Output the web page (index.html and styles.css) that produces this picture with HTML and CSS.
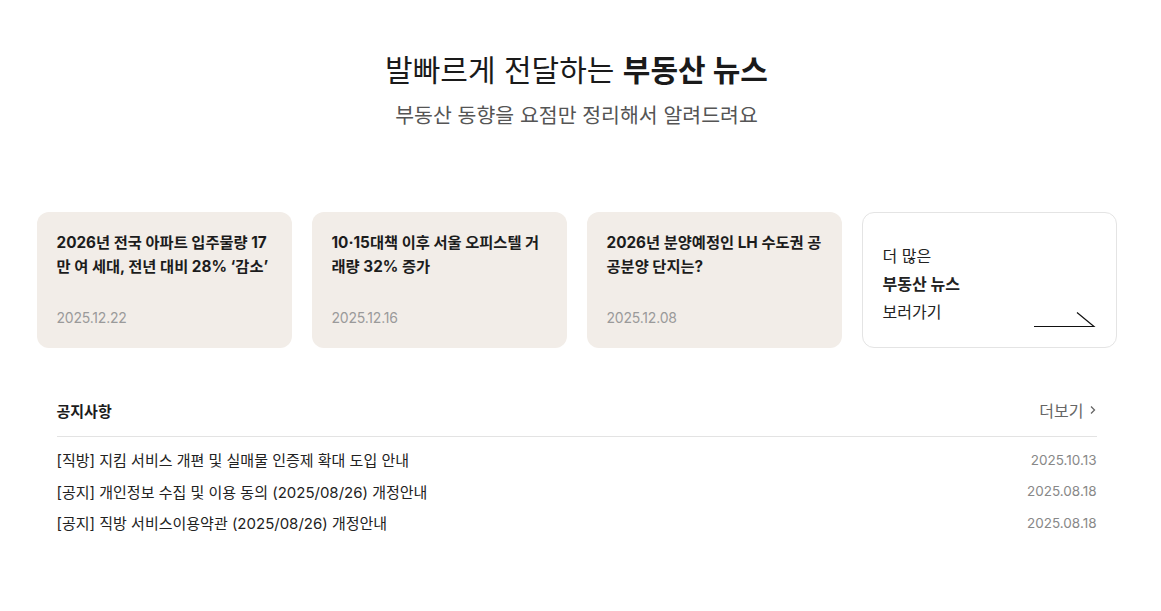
FILE: index.html
```html
<!DOCTYPE html>
<html lang="ko">
<head>
<meta charset="utf-8">
<title>부동산 뉴스</title>
<link rel="stylesheet" href="styles.css">
</head>
<body>
<main class="page">
  <header class="hero">
    <h1 class="hero-title">발빠르게 전달하는 <strong>부동산 뉴스</strong></h1>
    <p class="hero-sub">부동산 동향을 요점만 정리해서 알려드려요</p>
  </header>

  <section class="cards">
    <a class="card" href="#">
      <p class="card-title">2026년 전국 아파트 입주물량 17만 여 세대, 전년 대비 28% ‘감소’</p>
      <span class="card-date">2025.12.22</span>
    </a>
    <a class="card" href="#">
      <p class="card-title">10·15대책 이후 서울 오피스텔 거래량 32% 증가</p>
      <span class="card-date">2025.12.16</span>
    </a>
    <a class="card" href="#">
      <p class="card-title">2026년 분양예정인 LH 수도권 공공분양 단지는?</p>
      <span class="card-date">2025.12.08</span>
    </a>
    <a class="card card-more" href="#">
      <span>더 많은</span>
      <strong>부동산 뉴스</strong>
      <span>보러가기</span>
      <svg class="more-arrow" width="62" height="16" viewBox="0 0 62 16" aria-hidden="true">
        <path d="M0 15.5H60L43 1.5" fill="none" stroke="#111" stroke-width="1.2"/>
      </svg>
    </a>
  </section>

  <section class="notice">
    <div class="notice-head">
      <h2 class="notice-title">공지사항</h2>
      <a class="notice-more" href="#">더보기
        <svg width="8" height="10" viewBox="0 0 8 10" aria-hidden="true"><path d="M2 1.5L5.5 5L2 8.5" fill="none" stroke="#666" stroke-width="1.3"/></svg>
      </a>
    </div>
    <ul class="notice-list">
      <li class="notice-item"><span class="notice-text">[직방] 지킴 서비스 개편 및 실매물 인증제 확대 도입 안내</span><span class="notice-date">2025.10.13</span></li>
      <li class="notice-item"><span class="notice-text">[공지] 개인정보 수집 및 이용 동의 (2025/08/26) 개정안내</span><span class="notice-date">2025.08.18</span></li>
      <li class="notice-item"><span class="notice-text">[공지] 직방 서비스이용약관 (2025/08/26) 개정안내</span><span class="notice-date">2025.08.18</span></li>
    </ul>
  </section>
</main>
</body>
</html>
```
FILE: styles.css
```css
* { box-sizing: border-box; }
html, body { margin: 0; padding: 0; background: #fff; }
body {
  font-family: Inter, "Noto Sans CJK KR", "Noto Sans", sans-serif;
  color: #222;
  padding-right: 8px;
}
a { color: inherit; text-decoration: none; }

.page {
  width: 1080px;
  margin: 0 auto;
  padding-top: 48px;
}

.hero { text-align: center; }
.hero-title {
  margin: 0;
  font-size: 30px;
  line-height: 44px;
  font-weight: 400;
  color: #1a1a1a;
}
.hero-title strong { font-weight: 700; }
.hero-sub {
  margin: 9px 0 0;
  font-size: 20.5px;
  line-height: 30px;
  color: #555;
}

.cards {
  margin-top: 81px;
  display: grid;
  grid-template-columns: repeat(4, 1fr);
  gap: 20px;
}
.card {
  height: 136px;
  border-radius: 12px;
  background: #f2ede8;
  padding: 19px 20px 20px;
  display: flex;
  flex-direction: column;
  justify-content: space-between;
}
.card-title {
  margin: 0;
  font-size: 15.3px;
  line-height: 24px;
  font-weight: 700;
  color: #1c1c1c;
}
.card-date {
  font-size: 14px;
  line-height: 20px;
  color: #9a9a9a;
  letter-spacing: -0.2px;
}

.card-more {
  position: relative;
  background: #fff;
  border: 1px solid #e4e4e4;
  justify-content: flex-start;
  padding: 29px 20px 20px;
  font-size: 16px;
  line-height: 28px;
  color: #222;
}
.card-more strong { font-weight: 700; }
.more-arrow {
  position: absolute;
  right: 20px;
  bottom: 20px;
}

.notice {
  margin-top: 46px;
  padding: 0 20px;
}
.notice-head {
  display: flex;
  justify-content: space-between;
  align-items: center;
  height: 32px;
  padding-bottom: 10px;
  border-bottom: 1px solid #e3e3e3;
  box-sizing: content-box;
}
.notice-title {
  margin: 0;
  font-size: 15px;
  font-weight: 700;
  color: #1c1c1c;
}
.notice-more {
  display: flex;
  align-items: center;
  gap: 5px;
  font-size: 16px;
  color: #666;
}
.notice-list {
  list-style: none;
  margin: 0;
  padding: 7px 0 0;
}
.notice-item {
  display: flex;
  justify-content: space-between;
  align-items: center;
  height: 31.5px;
}
.notice-text {
  font-size: 15px;
  color: #222;
}
.notice-date {
  font-size: 13.5px;
  color: #888;
}
```
